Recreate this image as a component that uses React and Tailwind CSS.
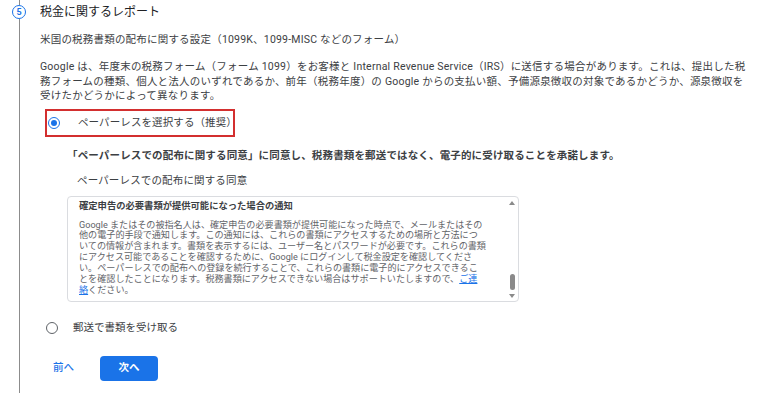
import React from "react";

const font = { fontFamily: "Roboto, 'Noto Sans CJK JP', sans-serif" };

const introLines = [
  "Google は、年度末の税務フォーム（フォーム 1099）をお客様と Internal Revenue Service（IRS）に送信する場合があります。これは、提出した税",
  "務フォームの種類、個人と法人のいずれであるか、前年（税務年度）の Google からの支払い額、予備源泉徴収の対象であるかどうか、源泉徴収を",
  "受けたかどうかによって異なります。",
];

const noticeLines = [
  "Google またはその被指名人は、確定申告の必要書類が提供可能になった時点で、メールまたはその",
  "他の電子的手段で通知します。この通知には、これらの書類にアクセスするための場所と方法につ",
  "いての情報が含まれます。書類を表示するには、ユーザー名とパスワードが必要です。これらの書類",
  "にアクセス可能であることを確認するために、Google にログインして税金設定を確認してくださ",
  "い。ペーパーレスでの配布への登録を続行することで、これらの書類に電子的にアクセスできるこ",
  "とを確認したことになります。税務書類にアクセスできない場合はサポートいたしますので、",
];

function Radio({ checked }) {
  return (
    <span
      className={
        "grid h-[12px] w-[12px] shrink-0 place-items-center rounded-full border-[1.5px] " +
        (checked ? "border-[#1a73e8]" : "border-[#5f6368]")
      }
    >
      {checked && <span className="h-[6px] w-[6px] rounded-full bg-[#1a73e8]" />}
    </span>
  );
}

export default function App() {
  return (
    <div className="flex h-[393px] w-[765px] overflow-hidden bg-white" style={font}>
      <div className="flex w-[38px] shrink-0 flex-col items-center">
        <div className="h-[5px] w-px bg-[#8c8c8c]" />
        <div className="grid h-[14px] w-[14px] place-items-center rounded-full border-[1.5px] border-[#1a73e8] text-[9px] font-bold leading-none text-[#1a73e8]">
          5
        </div>
        <div className="w-px flex-1 bg-[#8c8c8c]" />
      </div>

      <div className="flex-1 pl-[2px] pt-[4px]">
        <h1 className="text-[12px] leading-[16px] text-[#202124]">税金に関するレポート</h1>
        <p className="mt-[13px] text-[10.5px] leading-[14px] tracking-[0.2px] text-[#3c4043]">
          米国の税務書類の配布に関する設定（1099K、1099-MISC などのフォーム）
        </p>
        <div className="mt-[13px] text-[10.5px] leading-[14.5px] tracking-[0.22px] text-[#3c4043]">
          {introLines.map((line) => (
            <div key={line} className="whitespace-nowrap">
              {line}
            </div>
          ))}
        </div>

        <div className="ml-[5px] mt-[5px] flex h-[28px] w-[190px] items-center border-2 border-[#d32f2f] pl-[1px]">
          <Radio checked />
          <span className="ml-[18px] text-[10.5px] tracking-[0.1px] text-[#3c4043]">ペーパーレスを選択する（推奨）</span>
        </div>

        <p className="ml-[27px] mt-[12px] whitespace-nowrap text-[10.5px] font-bold leading-[14px] tracking-[0.15px] text-[#3c4043]">
          「ペーパーレスでの配布に関する同意」に同意し、税務書類を郵送ではなく、電子的に受け取ることを承諾します。
        </p>
        <p className="ml-[37px] mt-[11px] text-[10.5px] leading-[14px] tracking-[0.15px] text-[#3c4043]">
          ペーパーレスでの配布に関する同意
        </p>

        <div className="ml-[27px] mt-[8px] flex h-[106px] w-[452px] overflow-hidden rounded-[4px] border border-[#dadce0]">
          <div className="flex-1 pl-[11px] pt-[3px]">
            <div className="text-[9.3px] font-bold leading-[11px] text-[#3c4043]">
              確定申告の必要書類が提供可能になった場合の通知
            </div>
            <div className="mt-[9px] text-[9.1px] leading-[10.9px] text-[#5f6368]">
              {noticeLines.map((line, i) => (
                <div key={i} className="whitespace-nowrap">
                  {line}
                  {i === noticeLines.length - 1 && (
                    <span className="text-[#1a73e8] underline">ご連</span>
                  )}
                </div>
              ))}
              <div className="whitespace-nowrap">
                <span className="text-[#1a73e8] underline">絡</span>ください。
              </div>
            </div>
          </div>
          <div className="flex w-[12px] flex-col items-center pb-[3px] pt-[4px]">
            <span className="h-0 w-0 border-x-[3px] border-b-[4px] border-x-transparent border-b-[#8a8a8a]" />
            <div className="flex-1" />
            <span className="h-[16px] w-[5px] rounded-full bg-[#8a8a8a]" />
            <span className="mt-[4px] h-0 w-0 border-x-[3px] border-t-[4px] border-x-transparent border-t-[#8a8a8a]" />
          </div>
        </div>

        <div className="ml-[6px] mt-[16px] flex h-[20px] items-center">
          <Radio />
          <span className="ml-[15px] text-[10.5px] text-[#3c4043]">郵送で書類を受け取る</span>
        </div>

        <div className="mt-[18px] flex items-center">
          <button className="ml-[13px] text-[10.5px] font-medium text-[#1a73e8]">前へ</button>
          <button className="ml-[26px] h-[25px] w-[58px] rounded-[4px] bg-[#1a73e8] text-[10.5px] font-bold text-white">
            次へ
          </button>
        </div>
      </div>
    </div>
  );
}
